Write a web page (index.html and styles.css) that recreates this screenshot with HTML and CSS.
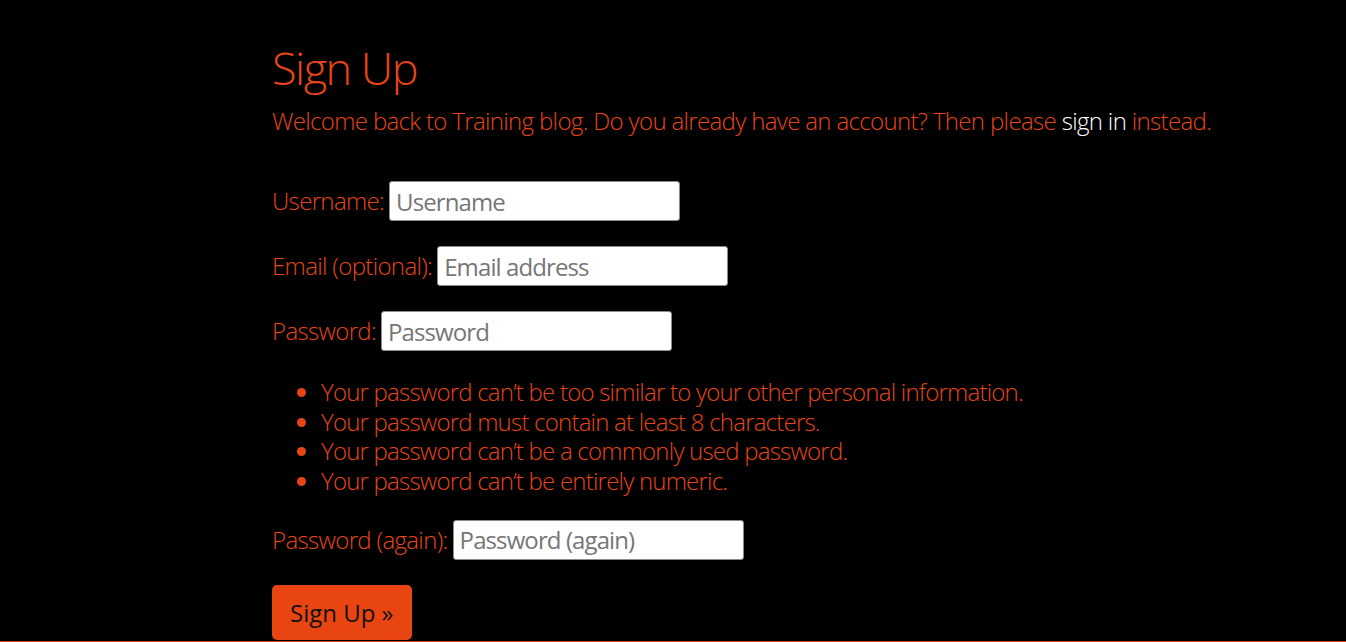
FILE: index.html
```html
<!DOCTYPE html>
<html lang="en">
<head>
<meta charset="utf-8">
<title>Sign Up</title>
<link rel="stylesheet" href="styles.css">
</head>
<body>
<main class="page">
  <h1 class="title">Sign Up</h1>
  <p class="intro">Welcome back to Training blog. Do you already have an account? Then please <a class="link" href="#">sign in</a> instead.</p>
  <form class="form">
    <div class="row">
      <label class="label" for="u">Username:</label>
      <input class="field" id="u" type="text" placeholder="Username">
    </div>
    <div class="row">
      <label class="label" for="e">Email (optional):</label>
      <input class="field" id="e" type="email" placeholder="Email address">
    </div>
    <div class="row">
      <label class="label" for="p1">Password:</label>
      <input class="field" id="p1" type="password" placeholder="Password">
    </div>
    <ul class="rules">
      <li>Your password can’t be too similar to your other personal information.</li>
      <li>Your password must contain at least 8 characters.</li>
      <li>Your password can’t be a commonly used password.</li>
      <li>Your password can’t be entirely numeric.</li>
    </ul>
    <div class="row">
      <label class="label" for="p2">Password (again):</label>
      <input class="field" id="p2" type="password" placeholder="Password (again)">
    </div>
    <button class="btn" type="submit">Sign Up »</button>
  </form>
</main>
<footer class="footer"></footer>
</body>
</html>
```
FILE: styles.css
```css
html, body {
  margin: 0;
  padding: 0;
  background: #000;
}
body {
  font-family: "Open Sans", "Noto Sans", sans-serif;
  font-weight: 300;
  color: #e84517;
  font-size: 24px;
  letter-spacing: -0.65px;
}
.page {
  padding: 41px 0 0 272px;
}
.title {
  margin: 0;
  font-size: 45px;
  font-weight: 300;
  line-height: 54px;
  letter-spacing: -1.5px;
}
.intro {
  margin: 8px 0 0;
  line-height: 36px;
}
.link {
  color: #fff;
  text-decoration: none;
}
.form {
  margin-top: 42px;
}
.row {
  display: flex;
  align-items: center;
  gap: 5px;
  height: 40px;
  margin-bottom: 25px;
}
.label {
  line-height: 40px;
}
.field {
  box-sizing: border-box;
  width: 291px;
  height: 40px;
  border: 1px solid #8a8a8a;
  border-radius: 3px;
  padding: 0 6px;
  background: #fff;
  font-family: "Open Sans", "Noto Sans", sans-serif;
  font-weight: 400;
  font-size: 24px;
  letter-spacing: -0.9px;
  color: #222;
}
.field::placeholder {
  color: #767676;
}
.rules {
  margin: 26px 0 24px;
  padding-left: 49px;
  line-height: 29.7px;
  letter-spacing: -0.78px;
}
.btn {
  display: block;
  margin-top: 24px;
  height: 55px;
  padding: 0 18px;
  border: none;
  border-radius: 5px;
  background: #e84513;
  color: #111;
  font-family: "Open Sans", "Noto Sans", sans-serif;
  font-weight: 400;
  font-size: 24px;
}
.footer {
  margin-top: 1px;
  border-top: 1px solid #e84517;
}
```
